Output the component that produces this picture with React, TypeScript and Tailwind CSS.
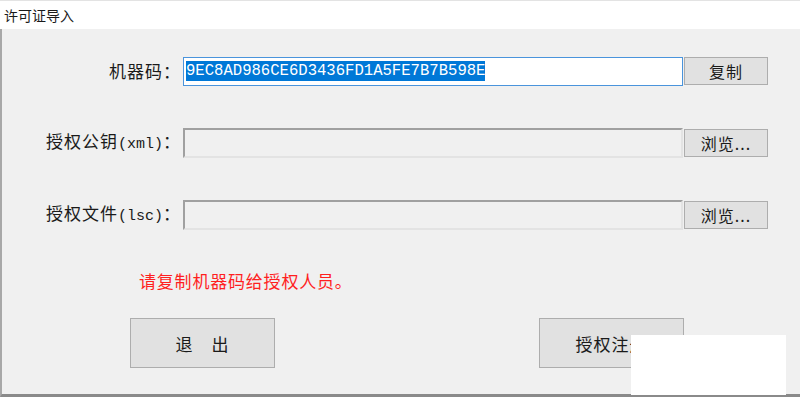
const cjk = "font-['Noto_Sans_CJK_SC','Noto_Sans',sans-serif]";

function Label({ children }: { children: React.ReactNode }) {
  return (
    <div
      className={`w-[183px] shrink-0 pr-[2px] text-right text-[17px] leading-[24px] tracking-[1px] text-[#1a1a1a] ${cjk}`}
    >
      {children}
    </div>
  );
}

function Mono({ children }: { children: React.ReactNode }) {
  return (
    <span className="font-['Liberation_Mono',monospace] text-[15px] tracking-normal">
      {children}
    </span>
  );
}

function SmallButton({ children }: { children: React.ReactNode }) {
  return (
    <button
      className={`ml-px h-[28px] w-[84px] border border-[#adadad] bg-[#e1e1e1] text-[16px] leading-none tracking-[1px] text-[#1a1a1a] ${cjk}`}
    >
      {children}
    </button>
  );
}

function BigButton({ children }: { children: React.ReactNode }) {
  return (
    <button
      className={`h-[50px] w-[145px] border border-[#adadad] bg-[#e1e1e1] text-[17px] leading-none tracking-[1px] text-[#1a1a1a] ${cjk}`}
    >
      {children}
    </button>
  );
}

function SunkenInput() {
  return (
    <div className="h-[30px] w-[500px] border-2 border-t-[#a0a0a0] border-l-[#a0a0a0] border-b-[#e3e3e3] border-r-[#e3e3e3] bg-[#f0f0f0]" />
  );
}

export default function App() {
  return (
    <div className="flex h-[397px] w-[800px] flex-col overflow-hidden bg-white">
      {/* title bar */}
      <div className="flex h-[29px] shrink-0 items-center border-t border-[#e3e3e3] bg-white pl-[4px]">
        <span className={`text-[14px] leading-none text-[#1a1a1a] ${cjk}`}>许可证导入</span>
      </div>

      {/* body */}
      <div className="relative flex flex-1 flex-col border-b-[3px] border-l-2 border-b-[#8a8a8a] border-l-[#a8a8a8] bg-[#f0f0f0] pt-[27px]">
        <div className="-ml-[2px] flex h-[30px] items-center">
          <Label>机器码：</Label>
          <div className="flex h-[29px] w-[500px] items-center border border-[#4a94dc] bg-white pl-[2px]">
            <span className="bg-[#0078d7] font-['Liberation_Mono',monospace] text-[15.6px] leading-[20px] text-white">
              9EC8AD986CE6D3436FD1A5FE7B7B598E
            </span>
          </div>
          <SmallButton>复制</SmallButton>
        </div>

        <div className="-ml-[2px] mt-[42px] flex h-[30px] items-center">
          <Label>
            授权公钥<Mono>(xml)</Mono>：
          </Label>
          <SunkenInput />
          <SmallButton>浏览...</SmallButton>
        </div>

        <div className="-ml-[2px] mt-[42px] flex h-[30px] items-center">
          <Label>
            授权文件<Mono>(lsc)</Mono>：
          </Label>
          <SunkenInput />
          <SmallButton>浏览...</SmallButton>
        </div>

        <div
          className={`ml-[137px] mt-[39px] text-[17px] leading-[24px] tracking-[0.8px] text-[#ff1f1f] ${cjk}`}
        >
          请复制机器码给授权人员。
        </div>

        <div className="ml-[128px] mt-[25px] flex gap-[264px]">
          <BigButton>退　出</BigButton>
          <BigButton>授权注册</BigButton>
        </div>

        {/* white patch lying over the register button */}
        <div className="absolute left-[629px] top-[306px] h-[60px] w-[155px] bg-white" />
      </div>
    </div>
  );
}
